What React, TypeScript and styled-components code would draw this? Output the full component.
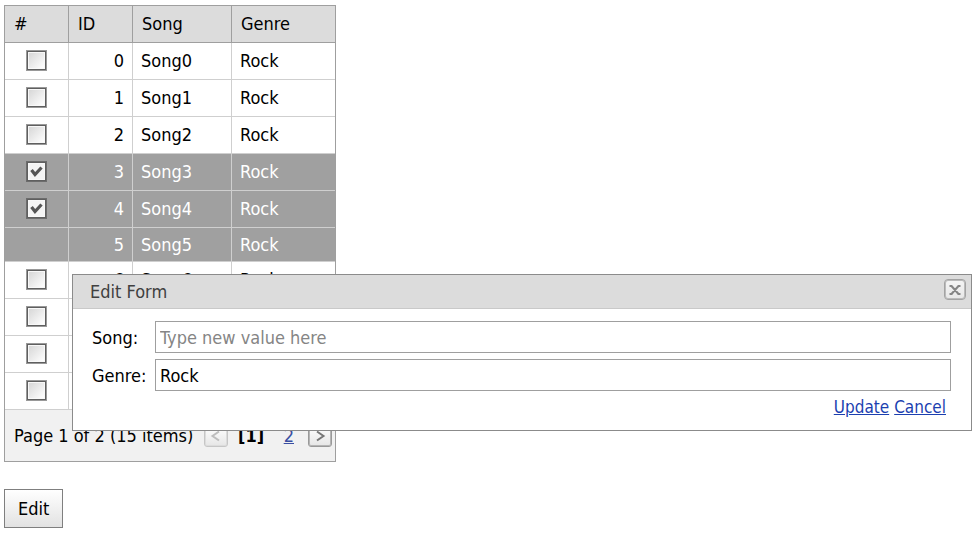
import React, { useState } from "react";
import styled, { createGlobalStyle, css } from "styled-components";

const GlobalStyle = createGlobalStyle`
  *, *::before, *::after { box-sizing: border-box; }
  body {
    margin: 0;
    background: #fff;
    color: #000;
    font: 18px/20px "DejaVu Sans Condensed", "Noto Sans", sans-serif;
  }
  input, button { font: inherit; color: inherit; }
`;

const Page = styled.main`
  padding: 5px 4px;
`;

const Grid = styled.section`
  width: 332px;
  border: 1px solid #9f9f9f;
`;

const Table = styled.table`
  width: 100%;
  table-layout: fixed;
  border-collapse: separate;
  border-spacing: 0;
`;

const HeadCell = styled.th<{ $width?: number }>`
  width: ${(p) => (p.$width ? `${p.$width}px` : "auto")};
  height: 37px;
  padding: 0 9px;
  font-weight: 400;
  text-align: left;
  background: #dcdcdc;
  border-bottom: 1px solid #9f9f9f;
  border-right: 1px solid #9f9f9f;
  &:last-child { border-right: 0; }
`;

const Cell = styled.td<{ $align?: "right" | "center" }>`
  padding: 0 8px;
  text-align: ${(p) => p.$align ?? "left"};
  border-bottom: 1px solid #cfcfcf;
  border-right: 1px solid #cfcfcf;
  &:last-child { border-right: 0; }
`;

const Row = styled.tr<{ $selected: boolean; $short: boolean }>`
  height: ${(p) => (p.$short ? 34 : 37)}px;
  ${(p) =>
    p.$selected &&
    css`
      background: #a0a0a0;
      color: #fff;
    `}
`;

const CheckFrame = styled.span`
  display: grid;
  place-items: center;
  padding-bottom: 2px;
  > * { grid-area: 1 / 1; }
  svg { pointer-events: none; }
`;

const CheckInput = styled.input`
  appearance: none;
  width: 21px;
  height: 21px;
  margin: 0;
  border: 1px solid #999;
  box-shadow: inset 0 0 0 1px #5f5f5f, inset 0 0 0 2px #f8f8f8;
  background: linear-gradient(135deg, #d2d2d2, #fcfcfc 85%);
  &:checked {
    border-color: #6c6c6c;
    background: #f4f4f4;
  }
`;

const Pager = styled.nav`
  display: flex;
  align-items: center;
  height: 51px;
  padding: 0 3px 0 9px;
  background: #f1f1f1;
  white-space: nowrap;
`;

const Summary = styled.span`
  flex: 1;
`;

const PagerButton = styled.button`
  display: grid;
  place-items: center;
  width: 24px;
  height: 22px;
  padding: 0;
  border: 1px solid #999;
  box-shadow: inset 0 0 0 1px #b5b5b5;
  border-radius: 3px;
  color: #777;
  background: linear-gradient(#fff, #e6e6e6);
  &:disabled {
    border-color: #c6c6c6;
    box-shadow: inset 0 0 0 1px #dcdcdc;
    color: #bdbdbd;
  }
`;

const PageList = styled.span`
  display: flex;
  justify-content: space-between;
  width: 80px;
  padding: 0 14px 0 10px;
`;

const PageLink = styled.a`
  color: #394ea2;
`;

const EditButton = styled.button`
  display: block;
  height: 39px;
  margin-top: 27px;
  padding: 0 13px;
  border: 1px solid #7f7f7f;
  background: linear-gradient(#fff, #e2e2e2);
`;

const Popup = styled.section`
  position: absolute;
  top: 274px;
  left: 72px;
  right: 4px;
  background: #fff;
  border: 1px solid #8b8b8b;
`;

const PopupHeader = styled.header`
  display: flex;
  align-items: flex-start;
  justify-content: space-between;
  height: 34px;
  padding: 4px 5px 0 17px;
  background: #dcdcdc;
  border-bottom: 1px solid #c9c9c9;
`;

const PopupTitle = styled.h2`
  margin: 3px 0 0;
  font: inherit;
  color: #404040;
`;

const CloseButton = styled.button`
  display: grid;
  place-items: center;
  width: 22px;
  height: 21px;
  padding: 0;
  border: 1px solid #a3a3a3;
  box-shadow: inset 0 0 0 1px #bbb;
  border-radius: 4px;
  color: #858585;
  background: linear-gradient(#f4f4f4, #e8e8e8);
`;

const Form = styled.form`
  display: grid;
  grid-template-columns: 54px 1fr;
  align-items: center;
  row-gap: 6px;
  padding: 12px 20px 13px 19px;
`;

const Label = styled.label`
  padding-top: 2px;
  white-space: nowrap;
`;

const TextInput = styled.input`
  width: calc(100% - 9px);
  height: 32px;
  margin-left: 9px;
  padding: 1px 4px 0;
  border: 1px solid #9f9f9f;
  border-radius: 0;
  background: #fff;
  &::placeholder { color: #858585; opacity: 1; }
`;

const Actions = styled.div`
  grid-column: 1 / -1;
  display: flex;
  justify-content: flex-end;
  gap: 5px;
  padding-right: 5px;
  font-size: 17px;
`;

const ActionLink = styled.a`
  color: #1b3fb0;
`;

const rows = Array.from({ length: 10 }, (_, id) => ({
  id,
  song: `Song${id}`,
  genre: "Rock",
  selected: id >= 3 && id <= 5,
  selectable: id !== 5,
}));

function SelectBox({ label, initial }: { label: string; initial: boolean }) {
  const [checked, setChecked] = useState(initial);
  return (
    <CheckFrame>
      <CheckInput
        type="checkbox"
        aria-label={label}
        checked={checked}
        onChange={(e) => setChecked(e.target.checked)}
      />
      {checked && (
        <svg width="13" height="13" viewBox="0 0 13 13" aria-hidden="true">
          <path d="M1.5 5 5 9.500 11.500 2.500" fill="none" stroke="#555" strokeWidth="3.200" />
        </svg>
      )}
    </CheckFrame>
  );
}

function Chevron({ back }: { back?: boolean }) {
  return (
    <svg width="12" height="12" viewBox="0 0 12 12" aria-hidden="true">
      <path
        d={back ? "M9 1.5 2.5 6 9 10.5" : "M3 1.5 9.5 6 3 10.5"}
        fill="none"
        stroke="currentColor"
        strokeWidth="2"
      />
    </svg>
  );
}

export default function App() {
  const [song, setSong] = useState("");
  const [genre, setGenre] = useState("Rock");

  return (
    <>
      <GlobalStyle />
      <Page>
        <Grid aria-label="Songs">
          <Table>
            <thead>
              <tr>
                <HeadCell $width={64}>#</HeadCell>
                <HeadCell $width={64}>ID</HeadCell>
                <HeadCell $width={99}>Song</HeadCell>
                <HeadCell>Genre</HeadCell>
              </tr>
            </thead>
            <tbody>
              {rows.map((row) => (
                <Row key={row.id} $selected={row.selected} $short={!row.selectable}>
                  <Cell $align="center">
                    {row.selectable && (
                      <SelectBox label={`Select ${row.song}`} initial={row.selected} />
                    )}
                  </Cell>
                  <Cell $align="right">{row.id}</Cell>
                  <Cell>{row.song}</Cell>
                  <Cell>{row.genre}</Cell>
                </Row>
              ))}
            </tbody>
          </Table>
          <Pager aria-label="Pages">
            <Summary>Page 1 of 2 (15 items)</Summary>
            <PagerButton type="button" aria-label="Previous page" disabled>
              <Chevron back />
            </PagerButton>
            <PageList>
              <b>[1]</b>
              <PageLink href="#page-2">2</PageLink>
            </PageList>
            <PagerButton type="button" aria-label="Next page">
              <Chevron />
            </PagerButton>
          </Pager>
        </Grid>
        <EditButton type="button">Edit</EditButton>
      </Page>
      <Popup role="dialog" aria-labelledby="popup-title">
        <PopupHeader>
          <PopupTitle id="popup-title">Edit Form</PopupTitle>
          <CloseButton type="button" aria-label="Close">
            <svg width="12" height="12" viewBox="0 0 12 12" aria-hidden="true">
              <path
                d="M0.500 2H3.500M8.500 2H11.500M0.500 10H3.500M8.500 10H11.500M2.500 2 9.500 10M9.500 2 2.500 10"
                fill="none"
                stroke="currentColor"
                strokeWidth="2"
              />
            </svg>
          </CloseButton>
        </PopupHeader>
        <Form onSubmit={(e) => e.preventDefault()}>
          <Label htmlFor="song">Song:</Label>
          <TextInput
            id="song"
            type="text"
            placeholder="Type new value here"
            value={song}
            onChange={(e) => setSong(e.target.value)}
          />
          <Label htmlFor="genre">Genre:</Label>
          <TextInput
            id="genre"
            type="text"
            value={genre}
            onChange={(e) => setGenre(e.target.value)}
          />
          <Actions>
            <ActionLink href="#update">Update</ActionLink>
            <ActionLink href="#cancel">Cancel</ActionLink>
          </Actions>
        </Form>
      </Popup>
    </>
  );
}
